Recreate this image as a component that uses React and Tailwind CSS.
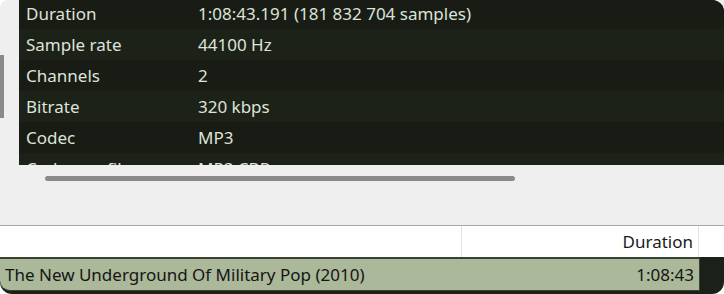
import React from "react";

const rows = [
  ["Duration", "1:08:43.191 (181 832 704 samples)"],
  ["Sample rate", "44100 Hz"],
  ["Channels", "2"],
  ["Bitrate", "320 kbps"],
  ["Codec", "MP3"],
  ["Codec profile", "MP3 CBR"],
];

export default function App() {
  return (
    <div
      className="w-[724px] h-[294px] bg-white overflow-hidden flex flex-col"
      style={{ fontFamily: '"Noto Sans", "Open Sans", sans-serif' }}
    >
      <div className="h-[225px] bg-[#efefef] rounded-tl-[8px] flex flex-col shrink-0">
        <div className="flex h-[165px] shrink-0">
          <div className="w-[19px] shrink-0 pt-[55px]">
            <div className="w-[4px] h-[63px] bg-[#8a8a8a]" />
          </div>
          <div className="flex-1 bg-[#191d16] rounded-tr-[12px] overflow-hidden">
            <div className="-mt-[2px]">
              {rows.map(([k, v], i) => (
                <div
                  key={k}
                  className={
                    "flex items-center h-[31px] text-[17px] text-[#dde3d8] " +
                    (i % 2 === 1 ? "bg-[#1d2219]" : "bg-[#181c15]")
                  }
                >
                  <div className="w-[179px] pl-[7px] shrink-0">{k}</div>
                  <div>{v}</div>
                </div>
              ))}
            </div>
          </div>
        </div>
        <div className="pl-[45px] pt-[11px]">
          <div className="w-[470px] h-[5px] rounded-full bg-[#8a8a8a]" />
        </div>
      </div>
      <div className="h-[1px] bg-[#a8a8a8] shrink-0" />
      <div className="h-[31px] bg-white flex shrink-0 text-[17px] text-[#1a1a1a]">
        <div className="w-[462px] border-r border-[#e2e2e2]" />
        <div className="w-[237px] border-r border-[#e2e2e2] flex items-center justify-end pr-[5px]">
          Duration
        </div>
      </div>
      <div className="flex-1 bg-[#1b2018] rounded-b-[12px]">
        <div className="w-[700px] h-[34px] bg-[#abb899] border-t-2 border-r border-b-[1px] border-[#3a4034] rounded-bl-[10px] flex items-center justify-between pl-[5px] pr-[5px] text-[17px] text-[#151515]">
          <span>The New Underground Of Military Pop (2010)</span>
          <span>1:08:43</span>
        </div>
      </div>
    </div>
  );
}
